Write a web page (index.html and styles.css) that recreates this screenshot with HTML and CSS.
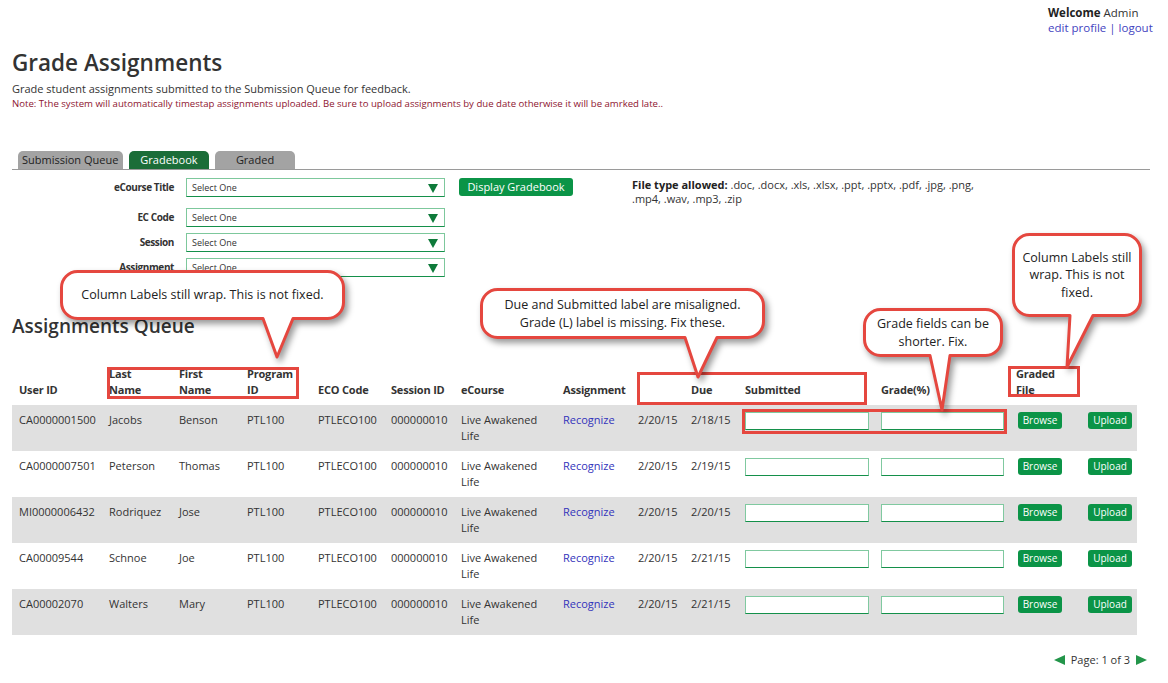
FILE: index.html
```html
<!DOCTYPE html>
<html lang="en">
<head>
<meta charset="utf-8">
<title>Grade Assignments</title>
<link rel="stylesheet" href="styles.css">
</head>
<body>
<div class="page">
  <div class="topbar">
    <div class="welcome">
      <div><b>Welcome</b> Admin</div>
      <div><a href="#">edit profile</a> <span class="sep">|</span> <a href="#">logout</a></div>
    </div>
  </div>

  <h1 class="title">Grade Assignments</h1>
  <p class="subtitle">Grade student assignments submitted to the Submission Queue for feedback.</p>
  <p class="note">Note: Tthe system will automatically timestap assignments uploaded. Be sure to upload assignments by due date otherwise it will be amrked late..</p>

  <div class="tabs">
    <div class="tab tab-sub">Submission Queue</div>
    <div class="tab tab-active">Gradebook</div>
    <div class="tab tab-graded">Graded</div>
  </div>

  <div class="filters">
    <div class="fields">
      <div class="frow frow-first">
        <label class="flabel">eCourse Title</label>
        <div class="sel"><span class="sel-text">Select One</span><svg class="sel-arrow" width="10" height="9" viewBox="0 0 10 9"><path d="M0 0H10L5 9Z" fill="#0e7a3a"/></svg></div>
      </div>
      <div class="frow">
        <label class="flabel">EC Code</label>
        <div class="sel"><span class="sel-text">Select One</span><svg class="sel-arrow" width="10" height="9" viewBox="0 0 10 9"><path d="M0 0H10L5 9Z" fill="#0e7a3a"/></svg></div>
      </div>
      <div class="frow">
        <label class="flabel">Session</label>
        <div class="sel"><span class="sel-text">Select One</span><svg class="sel-arrow" width="10" height="9" viewBox="0 0 10 9"><path d="M0 0H10L5 9Z" fill="#0e7a3a"/></svg></div>
      </div>
      <div class="frow frow-last">
        <label class="flabel">Assignment</label>
        <div class="sel"><span class="sel-text">Select One</span><svg class="sel-arrow" width="10" height="9" viewBox="0 0 10 9"><path d="M0 0H10L5 9Z" fill="#0e7a3a"/></svg></div>
      </div>
    </div>
    <button class="btn-display">Display Gradebook</button>
    <div class="filetypes"><b>File type allowed:</b> .doc, .docx, .xls, .xlsx, .ppt, .pptx, .pdf, .jpg, .png, .mp4, .wav, .mp3, .zip</div>
  </div>

  <h2 class="queue-title">Assignments Queue</h2>

  <table class="queue">
    <colgroup>
      <col style="width:90px"><col style="width:70px"><col style="width:68px"><col style="width:71px">
      <col style="width:73px"><col style="width:70px"><col style="width:102px"><col style="width:75px">
      <col style="width:53px"><col style="width:54px"><col style="width:136px"><col style="width:137px">
      <col style="width:70px"><col style="width:56px">
    </colgroup>
    <thead>
      <tr>
        <th>User ID</th><th>Last<br>Name</th><th>First<br>Name</th><th>Program<br>ID</th>
        <th>ECO Code</th><th>Session ID</th><th>eCourse</th><th>Assignment</th>
        <th></th><th>Due</th><th>Submitted</th><th>Grade(%)</th><th class="th-graded">Graded<br>File</th><th></th>
      </tr>
    </thead>
    <tbody>
      <tr class="odd">
        <td>CA0000001500</td><td>Jacobs</td><td>Benson</td><td>PTL100</td><td>PTLECO100</td><td>000000010</td>
        <td class="wrap">Live Awakened Life</td><td><a href="#">Recognize</a></td><td>2/20/15</td><td>2/18/15</td>
        <td><input class="gin gin-a" type="text"></td><td><input class="gin gin-b" type="text"></td>
        <td class="bcell"><button class="gbtn">Browse</button></td><td><button class="gbtn">Upload</button></td>
      </tr>
      <tr>
        <td>CA0000007501</td><td>Peterson</td><td>Thomas</td><td>PTL100</td><td>PTLECO100</td><td>000000010</td>
        <td class="wrap">Live Awakened Life</td><td><a href="#">Recognize</a></td><td>2/20/15</td><td>2/19/15</td>
        <td><input class="gin gin-a" type="text"></td><td><input class="gin gin-b" type="text"></td>
        <td class="bcell"><button class="gbtn">Browse</button></td><td><button class="gbtn">Upload</button></td>
      </tr>
      <tr class="odd">
        <td>MI0000006432</td><td>Rodriquez</td><td>Jose</td><td>PTL100</td><td>PTLECO100</td><td>000000010</td>
        <td class="wrap">Live Awakened Life</td><td><a href="#">Recognize</a></td><td>2/20/15</td><td>2/20/15</td>
        <td><input class="gin gin-a" type="text"></td><td><input class="gin gin-b" type="text"></td>
        <td class="bcell"><button class="gbtn">Browse</button></td><td><button class="gbtn">Upload</button></td>
      </tr>
      <tr>
        <td>CA00009544</td><td>Schnoe</td><td>Joe</td><td>PTL100</td><td>PTLECO100</td><td>000000010</td>
        <td class="wrap">Live Awakened Life</td><td><a href="#">Recognize</a></td><td>2/20/15</td><td>2/21/15</td>
        <td><input class="gin gin-a" type="text"></td><td><input class="gin gin-b" type="text"></td>
        <td class="bcell"><button class="gbtn">Browse</button></td><td><button class="gbtn">Upload</button></td>
      </tr>
      <tr class="odd">
        <td>CA00002070</td><td>Walters</td><td>Mary</td><td>PTL100</td><td>PTLECO100</td><td>000000010</td>
        <td class="wrap">Live Awakened Life</td><td><a href="#">Recognize</a></td><td>2/20/15</td><td>2/21/15</td>
        <td><input class="gin gin-a" type="text"></td><td><input class="gin gin-b" type="text"></td>
        <td class="bcell"><button class="gbtn">Browse</button></td><td><button class="gbtn">Upload</button></td>
      </tr>
    </tbody>
  </table>

  <div class="pager">
    <svg width="11" height="10" viewBox="0 0 11 10"><path d="M11 0V10L0 5Z" fill="#23954a"/></svg>
    <span>Page: 1 of 3</span>
    <svg width="11" height="10" viewBox="0 0 11 10"><path d="M0 0V10L11 5Z" fill="#23954a"/></svg>
  </div>

  <!-- review annotations overlaid on the page -->
  <div class="mark mark-1"></div>
  <div class="mark mark-2"></div>
  <div class="mark mark-3"></div>
  <div class="mark mark-4"></div>

  <div class="callout callout-1">
    <svg class="bubble" width="285" height="90" viewBox="0 0 285 90"><path d="M17.5,1.5 H267.5 A16 16 0 0 1 283.5,17.5 V32.5 A16 16 0 0 1 267.5,48.5 H233 L217,87 L203,48.5 H17.5 A16 16 0 0 1 1.5,32.5 V17.5 A16 16 0 0 1 17.5,1.5 Z"/></svg>
    <div class="ctext">Column Labels still wrap. This is not fixed.</div>
  </div>
  <div class="callout callout-2">
    <svg class="bubble" width="285" height="92" viewBox="0 0 285 92"><path d="M17.5,1.5 H267.5 A16 16 0 0 1 283.5,17.5 V33.5 A16 16 0 0 1 267.5,49.5 H237 L218,89 L205,49.5 H17.5 A16 16 0 0 1 1.5,33.5 V17.5 A16 16 0 0 1 17.5,1.5 Z"/></svg>
    <div class="ctext">Due and Submitted label are misaligned.<br>Grade (L) label is missing. Fix these.</div>
  </div>
  <div class="callout callout-3">
    <svg class="bubble" width="130" height="137" viewBox="0 0 130 137"><path d="M17.5,1.5 H112.5 A16 16 0 0 1 128.5,17.5 V66.5 A16 16 0 0 1 112.5,82.5 H81 L55,134 L58,82.5 H17.5 A16 16 0 0 1 1.5,66.5 V17.5 A16 16 0 0 1 17.5,1.5 Z"/></svg>
    <div class="ctext">Column Labels still<br>wrap. This is not<br>fixed.</div>
  </div>
  <div class="callout callout-4">
    <svg class="bubble" width="140" height="105" viewBox="0 0 140 105"><path d="M17.5,1.5 H122.5 A16 16 0 0 1 138.5,17.5 V31.5 A16 16 0 0 1 122.5,47.5 H87 L79,102 L67,47.5 H17.5 A16 16 0 0 1 1.5,31.5 V17.5 A16 16 0 0 1 17.5,1.5 Z"/></svg>
    <div class="ctext">Grade fields can be<br>shorter. Fix.</div>
  </div>
</div>
</body>
</html>
```

FILE: styles.css
```css
* { box-sizing: border-box; }

html, body {
  margin: 0;
  padding: 0;
  background: #ffffff;
}

body {
  font-family: "Open Sans", "Noto Sans", sans-serif;
  color: #333333;
  font-size: 11px;
}

.page {
  position: relative;
  width: 1168px;
  height: 683px;
  padding: 5px 18px 0 12px;
  overflow: hidden;
}

a { color: #3333bb; text-decoration: none; }

/* top bar */
.topbar {
  display: flex;
  justify-content: flex-end;
}
.welcome {
  font-size: 11.5px;
  line-height: 15px;
  width: 102px;
  white-space: nowrap;
}
.welcome b { color: #222; }
.welcome a { color: #4343c0; }
.welcome .sep { color: #4343c0; }

.title {
  margin: 13px 0 0;
  font-size: 22.5px;
  line-height: 30px;
  font-weight: 600;
  color: #333;
}
.subtitle {
  margin: 3px 0 0;
  font-size: 11px;
  line-height: 15px;
}
.note {
  margin: 1px 0 0;
  font-size: 9.6px;
  line-height: 14px;
  color: #8e1530;
}

/* tabs */
.tabs {
  display: flex;
  align-items: flex-end;
  gap: 6px;
  margin-top: 40px;
  padding-left: 6px;
  border-bottom: 1px solid #9a9a9a;
  height: 19px;
}
.tab {
  height: 18px;
  line-height: 18px;
  font-size: 11px;
  border-radius: 5px 5px 0 0;
  background: #a3a3a3;
  color: #222;
  text-align: center;
}
.tab-sub { width: 105px; text-align: left; padding-left: 4px; }
.tab-active { width: 80px; background: #1b6d38; color: #fff; }
.tab-graded { width: 80px; }

/* filters */
.filters {
  display: flex;
  align-items: flex-start;
  margin-top: 8px;
}
.fields { width: 433px; }
.frow {
  display: flex;
  align-items: center;
  height: 19px;
  margin-bottom: 6px;
}
.frow-first { margin-bottom: 11px; }
.frow-last { margin-bottom: 0; }
.flabel {
  width: 162px;
  margin-right: 12px;
  text-align: right;
  font-size: 10px;
  font-weight: 700;
  letter-spacing: -0.4px;
  color: #333;
  line-height: 14px;
  margin-top: -2px;
}
.sel {
  position: relative;
  width: 259px;
  height: 19px;
  border: 1px solid #7dc89c;
  border-bottom-color: #14904a;
  background: #fff;
  display: flex;
  align-items: center;
  padding-left: 5px;
}
.sel-text {
  font-size: 9px;
  color: #333;
  line-height: 12px;
  padding-top: 1px;
}
.sel-arrow {
  position: absolute;
  right: 6px;
  top: 5px;
}
.btn-display {
  margin-left: 14px;
  width: 114px;
  height: 18px;
  padding: 0;
  border: none;
  border-radius: 3px;
  background: #0b9447;
  color: #fff;
  font-family: inherit;
  font-size: 11px;
  line-height: 18px;
}
.filetypes {
  margin-left: 59px;
  width: 350px;
  font-size: 11px;
  line-height: 14px;
  color: #333;
}
.filetypes b { color: #222; }

.queue-title {
  margin: 37px 0 0;
  font-size: 19px;
  line-height: 24px;
  font-weight: 600;
  color: #333;
}

/* table */
.queue {
  margin-top: 28px;
  width: 1125px;
  table-layout: fixed;
  border-collapse: collapse;
  font-size: 11px;
}
.queue th {
  text-align: left;
  vertical-align: bottom;
  font-weight: 700;
  line-height: 16px;
  padding: 0 4px 7px 7px;
  color: #333;
  letter-spacing: -0.2px;
}
.queue th.th-graded { padding-left: 5px; }
.queue td {
  vertical-align: top;
  height: 46px;
  padding: 7px 4px 0 7px;
  line-height: 16px;
  color: #333;
}
.queue td.wrap { padding-right: 12px; }
.queue td.bcell { padding-left: 7px; }
.queue tr.odd td { background: #e0e0e0; }

.gin {
  display: block;
  height: 18px;
  border: 1px solid #80c9a0;
  border-bottom-color: #14904a;
  background: #fff;
  padding: 0;
  margin: 0;
}
.gin-a { width: 124px; }
.gin-b { width: 123px; }

.gbtn {
  display: block;
  width: 44px;
  height: 17px;
  padding: 0;
  border: none;
  border-radius: 3px;
  background: #0b9447;
  color: #fff;
  font-family: inherit;
  font-size: 10px;
  line-height: 17px;
}

/* pagination */
.pager {
  display: flex;
  align-items: center;
  justify-content: flex-end;
  gap: 6px;
  margin-top: 17px;
  padding-right: 3px;
  font-size: 11px;
  line-height: 16px;
  color: #333;
}

/* review annotations */
.mark {
  position: absolute;
  border: 3px solid #e5473f;
}
.mark-1 { left: 107px; top: 367px; width: 192px; height: 32px; }
.mark-2 { left: 637px; top: 372px; width: 230px; height: 33px; }
.mark-3 { left: 742px; top: 409px; width: 265px; height: 25px; }
.mark-4 { left: 1008px; top: 366px; width: 72px; height: 31px; }

.callout {
  position: absolute;
  display: flex;
  align-items: center;
  justify-content: center;
}
.bubble {
  position: absolute;
  left: 0;
  top: 0;
  overflow: visible;
  filter: drop-shadow(3px 4px 3px rgba(0, 0, 0, 0.4));
}
.bubble path {
  fill: #ffffff;
  stroke: #e5473f;
  stroke-width: 3;
  stroke-linejoin: round;
}
.ctext {
  position: relative;
  font-size: 12.5px;
  line-height: 17.5px;
  color: #222;
  text-align: center;
  white-space: nowrap;
}
.callout-1 { left: 60px; top: 270px; width: 285px; height: 50px; }
.callout-2 { left: 480px; top: 288px; width: 285px; height: 51px; }
.callout-3 { left: 1012px; top: 233px; width: 130px; height: 84px; }
.callout-4 { left: 863px; top: 308px; width: 140px; height: 49px; }
```
